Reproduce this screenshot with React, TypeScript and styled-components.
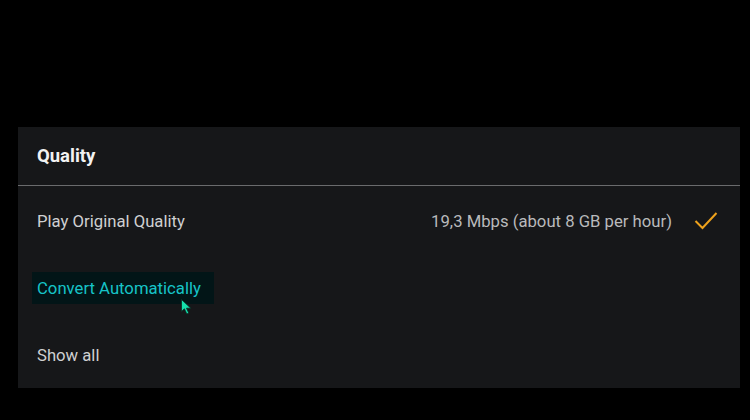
import styled, { createGlobalStyle } from "styled-components";

const GlobalStyle = createGlobalStyle`
  html, body {
    margin: 0;
    padding: 0;
    background: #000;
  }
  body {
    font-family: Roboto, "Noto Sans", Arial, sans-serif;
  }
`;

const Screen = styled.div`
  width: 750px;
  height: 420px;
  background: #000;
  padding: 127px 10px 0 18px;
  box-sizing: border-box;
`;

const Panel = styled.div`
  width: 722px;
  height: 261px;
  background: #161719;
  display: flex;
  flex-direction: column;
`;

const Header = styled.div`
  height: 58px;
  display: flex;
  align-items: center;
  padding: 0 19px;
  border-bottom: 1px solid #6a6b6d;
  color: #f2f2f2;
  font-size: 18.5px;
  font-weight: 700;
`;

const Row = styled.div`
  height: 67px;
  box-sizing: border-box;
  padding: 3px 22px 0 19px;
  display: flex;
  align-items: center;
  font-size: 16.7px;
  color: #cfd0d1;
`;

const Label = styled.span<{ $focused?: boolean }>`
  display: inline-flex;
  align-items: center;
  height: 32px;
  margin-left: -5px;
  padding: 0 13px 0 5px;
  position: relative;
  background: ${(p) => (p.$focused ? "#021517" : "transparent")};
  color: ${(p) => (p.$focused ? "#16c4c8" : "inherit")};
`;

const Spacer = styled.div`
  flex: 1;
`;

const Detail = styled.span`
  color: #b9babc;
  margin-right: 22px;
`;

const Cursor = styled.svg`
  position: absolute;
  left: 149px;
  top: 27px;
`;

export default function App() {
  return (
    <>
      <GlobalStyle />
      <Screen>
        <Panel>
          <Header>Quality</Header>
          <Row>
            <Label>Play Original Quality</Label>
            <Spacer />
            <Detail>19,3 Mbps (about 8 GB per hour)</Detail>
            <svg width="24" height="20" viewBox="0 0 24 20">
              <path d="M1.5 10 L8.5 17 L22.5 2" fill="none" stroke="#eea21c" strokeWidth="2" />
            </svg>
          </Row>
          <Row>
            <Label $focused>
              Convert Automatically
              <Cursor width="12" height="16" viewBox="0 0 12 16">
                <path d="M0.5 0.5 L0.5 12.5 L3.4 9.8 L5.8 15 L7.8 14.1 L5.5 9.2 L9.8 9.2 Z" fill="#16e0ac" stroke="#0a2a22" strokeWidth="0.8" />
              </Cursor>
            </Label>
          </Row>
          <Row>
            <Label>Show all</Label>
          </Row>
        </Panel>
      </Screen>
    </>
  );
}
